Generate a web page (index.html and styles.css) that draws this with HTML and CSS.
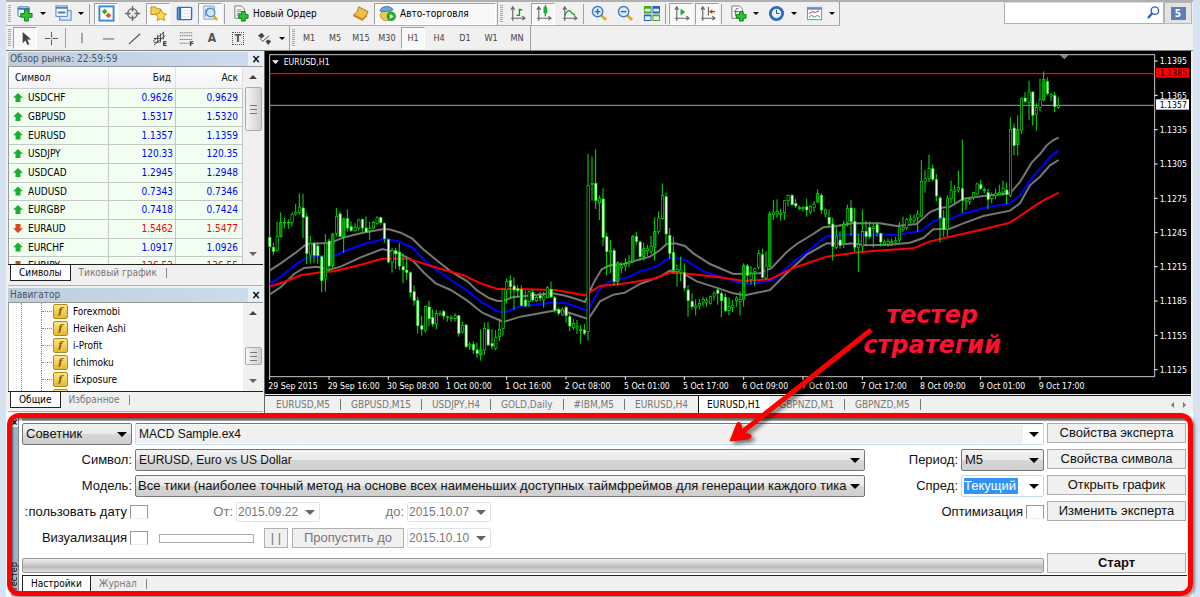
FILE: index.html
```html
<!DOCTYPE html>
<html lang="ru">
<head>
<meta charset="utf-8">
<title>EURUSD,H1</title>
<link rel="stylesheet" href="styles.css">
</head>
<body>
<div class="app">
  <header class="bars">
    <div class="bar-row">
      <div class="toolbar">
        <i class="grip"></i>
        <span class="split"><button class="tb" aria-label="Новый график"><svg viewBox="0 0 18 18"><rect x="1" y="2" width="12" height="10" rx="1" fill="#eef6ff" stroke="#3c78b4"/><path d="M1 4h12" stroke="#3c78b4" stroke-width="2"/><path d="M8 9V5h4v4h4v4h-4v4H8v-4H4V9z" fill="#2fc42f" stroke="#0a7d14"/></svg></button><i class="dd"></i></span>
        <span class="split"><button class="tb" aria-label="Профили"><svg viewBox="0 0 18 18"><rect x="5" y="6" width="12" height="10" fill="#dcebfb" stroke="#4a7fc0"/><rect x="1" y="1" width="12" height="11" fill="#f4f9ff" stroke="#4a7fc0"/><path d="M1 3h12M3 8h8" stroke="#4a7fc0" stroke-width="2"/></svg></button><i class="dd"></i></span>
        <i class="sep wide"></i>
        <button class="tb on" aria-label="Обзор рынка"><svg viewBox="0 0 18 18"><rect x="1.500" y="1.500" width="15" height="15" fill="#fff" stroke="#3a86d8" stroke-width="2"/><path d="M4 7l3-3 3 3-3 3z" fill="#28b428"/><path d="M8 11l3-3 3 3-3 3z" fill="#e8501e"/></svg></button>
        <button class="tb" aria-label="Окно данных"><svg viewBox="0 0 18 18" fill="none" stroke="#6a6a6a" stroke-width="1.500"><circle cx="9" cy="9" r="5"/><path d="M9 1v6M9 11v6M1 9h6M11 9h6"/></svg></button>
        <button class="tb on" aria-label="Навигатор"><svg viewBox="0 0 18 18"><path d="M1 2h5l1 2h4v6H1z" fill="#f7cf55" stroke="#b88a14"/><path d="M11.500 5l2 4 4 .5-3 3 .8 4-3.800-2-3.800 2 .8-4-3-3 4-.5z" fill="#ffdc50" stroke="#c08a10"/></svg></button>
        <button class="tb" aria-label="Терминал"><svg viewBox="0 0 18 18"><rect x="1.500" y="2.500" width="15" height="13" rx="1" fill="#fff" stroke="#2f6fc0" stroke-width="1.500"/><path d="M4 3v12" stroke="#2f6fc0" stroke-width="3"/><path d="M7 6h8M7 9h8M7 12h8" stroke="#d5dfec"/></svg></button>
        <button class="tb on" aria-label="Тестер стратегий"><svg viewBox="0 0 18 18"><path d="M2 1h11v14H2z" fill="#e6f0fa" stroke="#7ba0c8"/><path d="M4 4v8M6 3v6M11 3v4" stroke="#5588bb"/><circle cx="9" cy="8" r="4.500" fill="#cfe6fb" stroke="#5a90c8" stroke-width="1.500"/><path d="M12 11l4 5" stroke="#d9a520" stroke-width="2.500"/></svg></button>
        <i class="sep"></i>
        <button class="tb text order"><svg viewBox="0 0 18 18"><path d="M3 1h7l3 3v10H3z" fill="#fafafa" stroke="#777"/><path d="M5 5h5M5 7h6M5 9h4M5 11h4" stroke="#888"/><path d="M10 10V7h4v3h3v4h-3v3h-4v-3H7v-4z" fill="#2fc42f" stroke="#0a7d14"/></svg>Новый Ордер</button>
        <button class="tb" aria-label="MetaEditor"><svg viewBox="0 0 18 18"><path d="M7 2l10 5-2 4-4 4-9-5c3-1 4-4 5-8z" fill="#efbf4c" stroke="#a87414"/><path d="M1 10l10 5 5-5v2l-5 5-10-5z" fill="#c98d1c"/></svg></button>
        <button class="tb text on auto"><svg viewBox="0 0 18 18"><ellipse cx="8" cy="11" rx="6.500" ry="5.500" fill="#f2c94e" stroke="#b98a1a"/><path d="M1 6c1-5 11-6 14-1-3 2-11 3-14 1z" fill="#64a8e0" stroke="#3a78b0"/><circle cx="13" cy="12" r="5" fill="#1fae2c"/><path d="M11.500 9.500v5l4-2.500z" fill="#fff"/></svg>Авто-торговля</button>
      </div>
      <div class="toolbar">
        <i class="grip"></i>
        <button class="tb" aria-label="Бары"><svg viewBox="0 0 18 18" fill="none"><path d="M4 3v14M2 14h14M2 5l2-3 2 3M14 12l3 2-3 2" stroke="#666" stroke-width="1.200"/><path d="M8 11h3V4M11 5h3" stroke="#149a28" stroke-width="1.500"/></svg></button>
        <button class="tb on" aria-label="Свечи"><svg viewBox="0 0 18 18" fill="none"><path d="M4 3v14M2 14h14M2 5l2-3 2 3M14 12l3 2-3 2" stroke="#666" stroke-width="1.200"/><path d="M11 0v12" stroke="#149a28" stroke-width="1.500"/><rect x="9" y="2" width="4" height="7" rx="1" fill="#19b52e"/></svg></button>
        <button class="tb" aria-label="Линия"><svg viewBox="0 0 18 18" fill="none"><path d="M4 3v14M2 14h14M2 5l2-3 2 3M14 12l3 2-3 2" stroke="#666" stroke-width="1.200"/><path d="M4 11c3-6 5-6 7-3l4 3" stroke="#149a28" stroke-width="1.300"/></svg></button>
        <i class="sep"></i>
        <button class="tb" aria-label="Увеличить"><svg viewBox="0 0 18 18"><path d="M11 11l5 5" stroke="#dca928" stroke-width="3"/><circle cx="7" cy="7" r="5.500" fill="#d8ecfc" stroke="#3a7ec4" stroke-width="1.500"/><path d="M4 7h6M7 4v6" stroke="#2468b4" stroke-width="1.500"/></svg></button>
        <button class="tb" aria-label="Уменьшить"><svg viewBox="0 0 18 18"><path d="M11 11l5 5" stroke="#dca928" stroke-width="3"/><circle cx="7" cy="7" r="5.500" fill="#d8ecfc" stroke="#3a7ec4" stroke-width="1.500"/><path d="M4 7h6" stroke="#2468b4" stroke-width="1.500"/></svg></button>
        <button class="tb" aria-label="Расположить окна"><svg viewBox="0 0 18 18"><path d="M1 1h8v8H1zM10 10h8v7h-8z" fill="#4aa820"/><path d="M10 1h8v8h-8zM1 10h8v7H1z" fill="#2a62c8"/><path d="M2 4h6v3H2zM11 4h6v3h-6zM2 12h6v4H2zM11 12h6v4h-6z" fill="#e2eef0"/></svg></button>
        <i class="sep"></i>
        <button class="tb on" aria-label="Автопрокрутка"><svg viewBox="0 0 18 18"><path d="M4 3v14M2 14h14M2 5l2-3 2 3M14 12l3 2-3 2" stroke="#666" fill="none" stroke-width="1.200"/><path d="M8 4v7l5-3.500z" fill="#1ea834"/></svg></button>
        <button class="tb on" aria-label="Сдвиг графика"><svg viewBox="0 0 18 18"><path d="M4 3v14M2 14h14M2 5l2-3 2 3M14 12l3 2-3 2M10 2v9" stroke="#666" fill="none" stroke-width="1.200"/><path d="M11 7h6" stroke="#d03a14" stroke-width="1.500"/><path d="M11 7l3-2.500v5z" fill="#d03a14"/></svg></button>
        <i class="sep wide"></i>
        <span class="split"><button class="tb" aria-label="Индикаторы"><svg viewBox="0 0 18 18"><path d="M2 1h8l3 3v10H2z" fill="#fafafa" stroke="#777"/><path d="M9 4c-3-1-3 1-3 4v4M4 7h5" stroke="#555" fill="none"/><path d="M10 10V7h4v3h3v4h-3v3h-4v-3H7v-4z" fill="#2fc42f" stroke="#0a7d14"/></svg></button><i class="dd"></i></span>
        <span class="split"><button class="tb" aria-label="Периоды"><svg viewBox="0 0 18 18"><circle cx="9" cy="9" r="6.500" fill="#e6f2fc" stroke="#2a6cc0" stroke-width="3"/><path d="M9 5v4h3" stroke="#345" fill="none"/></svg></button><i class="dd"></i></span>
        <span class="split"><button class="tb" aria-label="Шаблоны"><svg viewBox="0 0 18 18"><rect x="1.500" y="2.500" width="15" height="13" fill="#fff" stroke="#5a94cc"/><path d="M1 4h16" stroke="#5a94cc" stroke-width="2"/><path d="M3 9l4-2 3 1 4-2" stroke="#b03020" fill="none"/><path d="M3 13l3-2 3 2 3-2 3 2" stroke="#2e9a38" fill="none"/></svg></button><i class="dd"></i></span>
      </div>
      <form class="search">
        <input type="text" aria-label="Поиск">
        <svg class="lens" viewBox="0 0 14 14" fill="none" stroke="#2c60c8"><circle cx="8.500" cy="5" r="4" stroke-width="1.500"/><path d="M5.500 8L1 13" stroke-width="2.500"/></svg>
        <button type="button" class="chat"><span>5</span></button>
      </form>
    </div>
    <div class="bar-row second">
      <div class="toolbar">
        <i class="grip"></i>
        <button class="tb on" aria-label="Курсор"><svg viewBox="0 0 18 18"><path d="M6 2v12l3-3 2 5 2-1-2-5h4z" fill="#444"/></svg></button>
        <button class="tb" aria-label="Перекрестие"><svg viewBox="0 0 18 18"><path d="M9 2v6M9 10v6M2 9h6M10 9h6" stroke="#555"/></svg></button>
        <i class="sep wide"></i>
        <button class="tb" aria-label="Вертикальная линия"><svg viewBox="0 0 18 18"><path d="M8.500 3v11" stroke="#555"/></svg></button>
        <button class="tb" aria-label="Горизонтальная линия"><svg viewBox="0 0 18 18"><path d="M3 9.500h12" stroke="#555"/></svg></button>
        <button class="tb" aria-label="Трендовая линия"><svg viewBox="0 0 18 18"><path d="M3 15L15 4" stroke="#555" stroke-width="1.300"/></svg></button>
        <button class="tb" aria-label="Канал"><svg viewBox="0 0 18 18"><path d="M1 12L13 2M2 16L14 6M6 5v8M9 4v9M12 2v8M2 9h9M2 13h6" stroke="#444" fill="none"/><text x="11" y="17" class="mini">E</text></svg></button>
        <button class="tb" aria-label="Фибоначчи"><svg viewBox="0 0 18 18"><path d="M2 3h14M2 6h14M2 10h14M2 14h9" stroke="#444" stroke-dasharray="1 1"/><text x="12" y="17" class="mini">F</text></svg></button>
        <button class="tb letter" aria-label="Текст">A</button>
        <button class="tb letter" aria-label="Метка"><span class="dotted">T</span></button>
        <span class="split"><button class="tb" aria-label="Стрелки"><svg viewBox="0 0 18 18"><path d="M2 6l4-3 3 3-3 3zM10 12l3-2 3 2-3 4z" fill="#444"/><path d="M4 9l3 3 7-6" stroke="#444" fill="none"/></svg></button><i class="dd"></i></span>
      </div>
      <div class="toolbar">
        <i class="grip"></i>
        <button class="tb">M1</button><button class="tb">M5</button><button class="tb">M15</button><button class="tb">M30</button><button class="tb on">H1</button><button class="tb">H4</button><button class="tb">D1</button><button class="tb">W1</button><button class="tb">MN</button>
      </div>
    </div>
  </header>

  <main class="work">
    <aside class="side">
      <section class="dock market">
        <h2 class="title"><span>Обзор рынка: 22:59:59</span><button aria-label="Закрыть">×</button></h2>
        <div class="dock-body">
          <div class="list">
            <table>
              <thead><tr><th>Символ</th><th>Бид</th><th>Аск</th></tr></thead>
              <tbody>
                <tr class="up"><td>USDCHF</td><td>0.9626</td><td>0.9629</td></tr>
                <tr class="up"><td>GBPUSD</td><td>1.5317</td><td>1.5320</td></tr>
                <tr class="up"><td>EURUSD</td><td>1.1357</td><td>1.1359</td></tr>
                <tr class="up"><td>USDJPY</td><td>120.33</td><td>120.35</td></tr>
                <tr class="up"><td>USDCAD</td><td>1.2945</td><td>1.2948</td></tr>
                <tr class="up"><td>AUDUSD</td><td>0.7343</td><td>0.7346</td></tr>
                <tr class="up"><td>EURGBP</td><td>0.7418</td><td>0.7424</td></tr>
                <tr class="down"><td>EURAUD</td><td>1.5462</td><td>1.5477</td></tr>
                <tr class="up"><td>EURCHF</td><td>1.0917</td><td>1.0926</td></tr>
                <tr class="down"><td>EURJPY</td><td>136.53</td><td>136.55</td></tr>
              </tbody>
            </table>
          </div>
          <div class="scroll"><i class="tri up"></i><i class="thumb long"></i><i class="tri down"></i></div>
        </div>
        <nav class="tabs"><a href="#" class="active">Символы</a><a href="#">Тиковый график</a></nav>
      </section>
      <section class="dock navigator">
        <h2 class="title"><span>Навигатор</span><button aria-label="Закрыть">×</button></h2>
        <div class="dock-body">
          <ul class="tree">
            <li>Forexmobi</li><li>Heiken Ashi</li><li>i-Profit</li><li>Ichimoku</li><li>iExposure</li><li></li>
          </ul>
          <div class="scroll"><i class="tri up"></i><i class="thumb low"></i><i class="tri down"></i></div>
        </div>
        <nav class="tabs"><a href="#" class="active">Общие</a><a href="#">Избранное</a></nav>
      </section>
    </aside>

    <section class="chart-pane">
      <div class="chart">
        <svg id="chart" viewBox="3 3 2778 1029"></svg>
        <p class="caption">тестер<br>стратегий</p>
      </div>
      <nav class="chart-tabs">
        <a href="#">EURUSD,M5</a><a href="#">GBPUSD,M15</a><a href="#">USDJPY,H4</a><a href="#">GOLD,Daily</a><a href="#">#IBM,M5</a><a href="#" class="last">EURUSD,H4</a><a href="#" class="active">EURUSD,H1</a><a href="#">GBPNZD,M1</a><a href="#">GBPNZD,M5</a>
        <span class="pager"><i class="tri left"></i><i class="tri right"></i></span>
      </nav>
    </section>
  </main>

  <section class="tester">
    <div class="spine"><button aria-label="Закрыть">×</button><span>Тестер</span></div>
    <div class="tester-main">
      <form class="settings">
        <div class="row">
          <span class="combo kind"><select aria-label="Тип"><option>Советник</option></select></span>
          <span class="combo flat expert grow"><select aria-label="Эксперт"><option>MACD Sample.ex4</option></select></span>
        </div>
        <button type="button" class="side-btn">Свойства эксперта</button>

        <div class="row">
          <label for="symbol" class="lead">Символ:</label>
          <span class="combo grow latin"><select id="symbol"><option>EURUSD, Euro vs US Dollar</option></select></span>
          <label for="period" class="mid">Период:</label>
          <span class="combo small"><select id="period"><option>M5</option></select></span>
        </div>
        <button type="button" class="side-btn">Свойства символа</button>

        <div class="row">
          <label for="model" class="lead">Модель:</label>
          <span class="combo grow model"><select id="model"><option>Все тики (наиболее точный метод на основе всех наименьших доступных таймфреймов для генерации каждого тика</option></select></span>
          <label for="spread" class="mid">Спред:</label>
          <span class="combo flat small"><input id="spread" type="text" value="Текущий"></span>
        </div>
        <button type="button" class="side-btn">Открыть график</button>

        <div class="row">
          <label for="usedate" class="check-label">:пользовать дату</label><input type="checkbox" id="usedate">
          <label for="from" class="muted from">От:</label>
          <span class="combo date"><select id="from"><option>2015.09.22</option></select></span>
          <label for="to" class="muted to">до:</label>
          <span class="combo date"><select id="to"><option>2015.10.07</option></select></span>
          <label for="opt" class="push">Оптимизация</label><input type="checkbox" id="opt">
        </div>
        <button type="button" class="side-btn">Изменить эксперта</button>

        <div class="row">
          <label for="visual" class="check-label">Визуализация</label><input type="checkbox" id="visual">
          <span class="speed"></span>
          <button type="button" class="off pause">| |</button>
          <button type="button" class="off skip">Пропустить до</button>
          <span class="combo date"><select aria-label="Пропустить до"><option>2015.10.10</option></select></span>
        </div>
        <span></span>

        <div class="progress"></div>
        <button type="button" class="side-btn start">Старт</button>
      </form>
      <nav class="tabs"><a href="#" class="active">Настройки</a><a href="#">Журнал</a></nav>
    </div>
  </section>

  <svg class="arrow" viewBox="0 0 150 118" width="150" height="118"><path d="M144 4L14 107" fill="none" stroke="#f00" stroke-width="5"/><path d="M3 115L10 97Q12 95 14 98L15 106L24 109Q25 112 21 113z" fill="#f00" stroke="#f00" stroke-linejoin="round"/></svg>
</div>
<script src="chart.js"></script>
</body>
</html>
```

FILE: styles.css
```css
* { box-sizing: border-box; }
body {
  margin: 0;
  background: #d6e3f2;
  font: 10px/14px "DejaVu Sans Condensed", "Noto Sans", sans-serif;
  color: #111;
  overflow: hidden;
}
button, input, select { font: inherit; color: inherit; margin: 0; padding: 0; border: 0; border-radius: 0; background: none; }
a { color: inherit; text-decoration: none; }
i { font-style: normal; }
.app { position: relative; margin: 0 7px 0 6px; background: #f0f0f0; min-height: 100vh; }

/* toolbars */
.bars { border-top: 2px solid #b0b0b0; border-bottom: 1px solid #808080; }
.bar-row { display: flex; height: 24px; }
.toolbar { display: flex; align-items: center; gap: 2px; padding: 0 1px 0 2px; border-right: 1px solid #a0a0a0; border-bottom: 1px solid #b0b0b0; }
.second .toolbar { border-bottom: 0; }
.second .toolbar .tb { font-size: 9px; color: #444; }
.grip { width: 3px; height: 18px; background: repeating-linear-gradient(#a8a8a8 0 1px, #f0f0f0 1px 2px); }
.tb { width: 24px; height: 22px; display: flex; align-items: center; justify-content: center; white-space: nowrap; }
.tb.on { background: #f8f8f8; border: 1px solid; border-color: #a0a0a0 #fff #fff #a0a0a0; }
.tb svg { width: 17px; height: 17px; flex: none; }
.tb.text { justify-content: flex-start; gap: 4px; padding-left: 4px; color: #000; }
.order { width: 118px; }
.auto { width: 122px; }
.split { display: flex; align-items: center; }
.dd { width: 12px; display: flex; justify-content: center; }
.dd::before { content: ""; border: 3px solid transparent; border-top-color: #000; border-bottom: 0; }
.sep { width: 2px; height: 20px; border-left: 1px solid #a0a0a0; }
.sep.wide { width: 3px; }
.mini { font: bold 7px "DejaVu Sans", sans-serif; fill: #333; }
.second .toolbar .letter { font-size: 12px; font-weight: bold; color: #555; }
.dotted { border: 1px dotted #555; width: 12px; height: 13px; line-height: 12px; font-size: 11px; }
.search { margin-left: auto; display: flex; width: 189px; padding-right: 1px; position: relative; }
.search input { flex: 1; min-width: 0; height: 22px; background: #fff; border: 1px solid #b0b0b0; border-top-color: #ddd; }
.lens { position: absolute; right: 33px; top: 4px; width: 13px; height: 13px; }
.chat { width: 28px; height: 22px; background: #e3e3e3; border: 1px solid #b8b8b8; }
.chat span { display: block; margin: 0 auto; width: 15px; height: 13px; background: #5c7fb8; color: #fff; font-weight: bold; line-height: 13px; }

/* docked panels */
.work { display: flex; }
.side { width: 258px; padding: 1px 1px 0 2px; }
.dock { border-bottom: 1px solid #b0b0b0; }
.title { margin: 0; font: inherit; color: #44546a; height: 14px; display: flex; justify-content: space-between; background: linear-gradient(90deg, #bfcddb, #ccdcec 240px, #e6eef7 240px); }
.title span { padding-left: 2px; }
.title button, .spine button { width: 10px; color: #000; font-weight: bold; font-size: 12px; line-height: 13px; margin-right: 2px; }
.dock-body { display: flex; border: 1px solid #999; border-width: 1px 0 0 1px; background: #fff; overflow: hidden; }
.market .dock-body { height: 198px; }
.market { height: 234px; }
.list { flex: 1; }
table { width: 100%; border-collapse: separate; border-spacing: 0; table-layout: fixed; }
th { font-weight: normal; text-align: right; height: 22px; padding: 0 4px; background: linear-gradient(#fff, #f2f3f5); border-right: 1px solid #e0e0e0; border-bottom: 1px solid #d0d0d0; }
th:first-child { width: 100px; text-align: left; padding-left: 6px; }
td { height: 19px; padding: 0 2px; border-right: 1px solid #c4c8c4; border-bottom: 1px solid #c4c8c4; background: #f0fff0; text-align: right; }
tr:nth-child(3n) td { height: 18px; }
td:first-child { text-align: left; color: #000; }
td:last-child { padding-right: 4px; }
td:first-child::before { content: ""; display: inline-block; width: 10px; height: 9px; margin: 0 5px 0 2px; vertical-align: -1px; background: #1cae30; clip-path: polygon(50% 0, 100% 52%, 75% 52%, 75% 100%, 25% 100%, 25% 52%, 0 52%); }
td.down td:first-child::before, .down td:first-child::before { background: #d8481c; clip-path: polygon(50% 100%, 100% 48%, 75% 48%, 75% 0, 25% 0, 25% 48%, 0 48%); }
.up td + td { color: #00f; }
.down td + td { color: #f00; }
.scroll { width: 20px; display: flex; flex-direction: column; align-items: center; padding: 8px 0; background: #f0f0f0; }
.tri { border: 4px solid transparent; }
.tri.up { border-bottom-color: #444; border-top: 0; }
.tri.down { border-top-color: #666; border-bottom: 0; margin-top: auto; }
.thumb { width: 17px; border: 1px solid #aaa; border-radius: 2px; background: repeating-linear-gradient(#777 0 1px, transparent 1px 4px) center / 7px 9px no-repeat, linear-gradient(90deg, #f4f4f4, #d0d0d0); }
.thumb.long { height: 44px; margin-top: 8px; }
.thumb.low { height: 18px; margin-top: 32px; }
.tabs { display: flex; align-items: flex-start; border-top: 1px solid #222; padding-left: 2px; color: #777; }
.tabs a { padding: 0 8px; height: 16px; line-height: 16px; display: flex; align-items: center; }
.tabs a:not(.active)::after { content: ""; border-right: 1px solid #888; height: 10px; margin-left: 9px; }
.tabs .active { background: #fff; color: #000; border: solid #222; border-width: 0 1px 1px 1px; }
.navigator { margin-top: 2px; height: 124px; }
.navigator .dock-body { height: 89px; }
.tree { flex: 1; margin: 0 0 0 12px; padding: 0 0 0 19px; list-style: none; border-left: 1px dotted #888; }
.tree li { height: 17px; line-height: 17px; display: flex; align-items: center; border-left: 1px dotted #888; color: #000; }
.tree li::before { content: ""; order: -2; width: 10px; border-top: 1px dotted #888; }
.tree li::after { content: "f"; order: -1; width: 13px; height: 13px; margin: 0 5px 0 1px; text-align: center; font: italic bold 10px/12px "DejaVu Serif", serif; color: #8a5a00; background: linear-gradient(#fbe68a, #e6b830); border: 1px solid #b08a20; border-radius: 2px; }

/* chart */
.chart-pane { flex: 1; min-width: 0; border-left: 1px solid #666; padding-right: 2px; }
.chart { position: relative; background: #000; }
.chart svg { display: block; width: 100%; }
.chart text { font: 26px "DejaVu Sans Condensed", "Noto Sans", sans-serif; fill: #fff; }
.caption { position: absolute; right: 190px; bottom: 34px; margin: 0; text-align: center; font: italic bold 24px/30px "DejaVu Sans", sans-serif; color: #ff1030; }
.chart-tabs { display: flex; align-items: center; height: 18px; border-top: 1px solid #111; margin-top: 1px; padding-left: 1px; color: #777; }
.chart-tabs a { padding: 0 0 0 10px; display: flex; align-items: center; }
.chart-tabs a::after { content: ""; border-right: 1px solid #777; height: 11px; margin-left: 10px; }
.chart-tabs .active { background: #fff; color: #000; border-left: 1px solid #111; padding: 0 9px 0 8px; height: 17px; }
.chart-tabs .active::after, .chart-tabs .last::after { border: 0; }
.chart-tabs .active::after { margin: 0; }
.pager { margin-left: auto; display: flex; gap: 9px; padding-right: 2px; }
.tri.left { border-width: 3px; border-right-color: #777; }
.tri.right { border-width: 3px; border-left-color: #777; }

/* strategy tester */
.tester { position: relative; display: flex; background: #fff; height: 183px; padding: 5px 6px 0 5px; font: 13px/16px "Liberation Sans", Arial, sans-serif; }
.tester::after { content: ""; position: absolute; inset: 0 0 0 1px; border: 5px solid #f00; border-radius: 12px; box-shadow: 2px 2px 3px #0006, inset 1px 2px 2px #0007; pointer-events: none; }
.spine { width: 8px; padding-bottom: 5px; background: #9db4cc; display: flex; flex-direction: column; justify-content: space-between; align-items: center; margin-right: 3px; border-right: 1px solid #888; }
.spine button { font-size: 10px; line-height: 9px; margin: 0; background: #f0f0f0; width: 7px; }
.spine span { writing-mode: vertical-rl; transform: rotate(180deg); font: 9px/9px "DejaVu Sans Condensed", "Noto Sans", sans-serif; }
.tester-main { flex: 1; min-width: 0; border-top: 3px solid #b4b4b4; display: flex; flex-direction: column; }
.settings { display: grid; grid-template-columns: minmax(0, 1fr) 139px; grid-auto-rows: 22px; gap: 4px 3px; padding: 2px 1px 0 0; }
.row { display: flex; align-items: center; gap: 3px; }
.grow { flex: 1; min-width: 0; }
.combo { position: relative; display: flex; align-items: center; height: 22px; border: 1px solid #777; border-radius: 2px; background: linear-gradient(#f2f2f2, #e9e9e9 50%, #d6d6d6 50%, #cfcfcf); }
.combo select { appearance: none; width: 100%; padding: 0 18px 0 3px; outline: 0; }
.combo.model select { padding: 0 16px 0 2px; }
.combo::after { content: ""; position: absolute; right: 4px; border: 5px solid transparent; border-top-color: #000; border-bottom: 0; pointer-events: none; }
.kind { width: 110px; }
.small { width: 83px; }
.latin select, .expert select, .date select { font-size: 12px; }
.combo.flat { background: #fff; border-color: #c5daf0; }
.combo.expert { border-top-color: #4a86bd; background: linear-gradient(#f0f0f0, #f0f0f0) left / calc(100% - 20px) 18px no-repeat, #fff; }
.flat input { width: 54px; height: 16px; margin-left: 2px; background: #3193f5; color: #fff; }
.lead { width: 110px; text-align: right; }
.mid { width: 90px; text-align: right; }
.check-label { width: 105px; text-align: right; white-space: nowrap; }
input[type="checkbox"] { appearance: none; width: 18px; height: 14px; border: 1px solid #999; border-bottom-color: #eee; background: #fff; }
.muted, .date, .off { color: #777; }
.from { width: 82px; text-align: right; }
.to { width: 81px; text-align: right; }
.date { width: 84px; height: 20px; border-color: #dfe4ea; background: #fff; }
.combo.date::after { border-top-color: #666; }
.combo.date select { padding: 0 0 0 1px; }
.push { margin-left: auto; }
.speed { width: 95px; height: 9px; border: 1px solid #aaa; margin: 0 7px 0 8px; }
.off { height: 20px; border: 1px solid #b0b0b0; background: #f0f0f0; }
.pause { width: 24px; margin-right: 1px; }
.skip { width: 112px; }
.side-btn { height: 20px; border: 1px solid #adadad; background: #f0f0f0; white-space: nowrap; }
.start { font-weight: bold; }
.progress { height: 15px; margin-top: 5px; border: 1px solid #999; border-radius: 2px; background: linear-gradient(#eee, #c8c8c8 50%, #bbb 60%, #ddd); }
.tester .tabs { background: #f0f0f0; font: 10px/14px "DejaVu Sans Condensed", "Noto Sans", sans-serif; padding-left: 0; }
.arrow { position: absolute; left: 721px; top: 326px; filter: drop-shadow(3px 3px 2px #0008); pointer-events: none; }
```

FILE: chart.js
```javascript
// Each bar: high, low, body top, body bottom, kind (w = falling, g = strong rising, default = rising).
const blocks = [
  { first: 0, dy: 0, bars: `560,592,562,590,w 578,616,592,604,w 515,604,560,602 487,562,517,560,g 503,536,517,519 508,536,517,519 487,529,494,517 462,497,487,492 430,494,471,487 432,564,474,502,w 490,642,500,611,w 558,640,580,615 576,640,580,616,w 578,642,588,617,w 617,727,620,692,w 552,725,580,687 566,664,573,648,w 550,655,552,648,g 474,560,499,550 484,560,492,560,w 503,608,506,560,g 478,545,506,534,w 515,546,530,541,w 520,545,532,541 506,542,510,534 506,550,508,534,w 499,546,534,546,w 515,570,536,541 513,538,517,534 499,524,503,520 500,524,503,518,w 517,578,520,566,w 566,640,569,636,w 594,668,601,636 594,657,602,612,w 580,660,606,648,w 610,700,650,660,w 622,690,660,668,w 664,741,668,727,w 706,767,725,752,w 741,851,752,827,w 797,857,827,838,w 767,848,769,841 752,828,771,806,w 778,830,802,822,w 780,838,790,822 782,797,790,795 780,808,784,798,w 797,815,800,802 795,815,802,806 790,815,797,806 795,860,797,850,w 815,850,827,846 822,895,825,890,w 876,900,883,888 874,912,883,900,w 878,925,900,910,w 838,932,900,914,g 818,914,835,900 816,888,838,885,w 838,898,880,888,w 840,900,862,895 806,874,838,860 716,857,718,836 685,760,694,718 676,743,692,710,w 682,780,708,720,w 706,741,716,722,w 706,769,718,766,w 722,771,750,768,w 722,771,725,755 720,755,727,750,w 737,757,742,752 725,755,736,744,w 725,773,738,750 708,745,713,742 695,745,718,741,w 738,788,743,780,w 772,797,778,790,w 772,797,778,795` },
  { first: 80, dy: 240, bars: `528,578,532,557,w 552,604,560,588,w 568,600,580,592 570,612,590,594 585,641,598,602,g 582,615,600,610,w 72,632,166,605 80,212,160,164 58,237,160,212,w 196,270,206,218 175,348,207,322,w 310,437,320,365,w 330,430,362,366 355,468,362,455,w 394,466,398,455,g 396,430,408,414 384,424,402,408 375,412,396,400 315,398,318,396,g 306,344,320,334,w 332,392,336,380,w 338,392,356,380,g 344,378,356,362 318,372,350,364 262,392,304,352,g 244,312,264,304 160,270,196,266 188,340,200,312,w 294,386,316,370,w 320,430,368,420,w 404,470,418,424 380,454,420,426 400,484,428,474,w 466,560,480,512,w 490,538,514,530,w 508,556,528,532 506,538,520,526 500,530,508,516 502,530,512,518 496,524,500,520 484,512,490,498 474,524,480,490,w 484,562,490,512,w 490,546,502,542,w 502,556,530,542 510,546,526,532 498,530,504,512 484,556,508,514 400,530,406,508,g 402,460,408,436,w 408,464,432,448 412,468,416,424 360,418,370,412 356,446,374,442,w 364,448,408,444 244,412,252,410,g 210,270,248,254 208,264,244,252 236,272,250,254 210,270,212,248 194,230,196,212 192,228,196,224,w 206,234,220,228,w 226,240,232,236 228,244,232,236 206,260,230,240,w 226,252,230,246 214,246,224,232 178,220,190,216,g 190,252,196,240,w 236,262,240,252 238,290,262,282,w 264,392,282,350,w 290,358,320,352 304,356,330,346,w 272,354,282,342,g 224,290,236,276` },
  { first: 157, dy: 0, bars: `450,558,474,514,w 474,606,514,592,w 552,666,584,592 478,606,544,588 512,588,544,560,w 514,568,532,560,w 520,592,530,536 516,560,524,548,w 548,590,550,576,w 568,586,576,582 566,590,574,582 566,588,574,578 560,580,572,576 516,578,534,570 500,546,532,538 504,540,508,534 494,520,506,510 494,520,504,512 480,546,492,502 330,502,394,498 360,428,386,396 314,396,356,386 344,394,356,388,w 372,454,388,438,w 438,578,444,504,w 480,560,504,538,w 436,560,446,538 392,460,422,446 406,460,420,424 362,428,412,420 268,490,416,452,w 444,480,452,456 444,464,448,454 426,450,428,442 398,436,402,432 390,420,404,416,w 412,430,418,422 416,478,428,448,w 428,460,436,446 416,448,430,436 404,436,428,434 392,438,416,426 398,462,420,434,w 202,442,238,436 220,316,234,286,w 196,316,238,284,g 142,252,146,240 126,160,144,154,w 92,210,126,158 124,226,126,196,w 160,242,172,192 86,184,148,172 64,154,88,150,g 82,136,94,130,w 130,154,134,138 126,186,136,170,w 142,176,166,172` }
];

// Averages come in three stretches, each with its own origin.
const origins = [[0, 0], [888, 240], [1758, 0]];
const averages = {
  '#777': [
    ['17,662 50,640 95,608 128,582 175,580 195,580 240,562 290,550 355,538 375,538 410,548 445,566 480,600 520,632 560,664 610,694 640,722 675,744 700,753 718,753 745,742 790,737 865,730',
     '10,496 40,504 75,516 85,495 100,460 125,418 150,406 190,402 220,394 270,380 300,360 320,342 345,340 375,348 400,370 450,402 520,432 600,430 635,414 680,366 710,342 750,318 790,292 830,288 865,282',
     '4,520 90,520 140,528 200,522 240,486 270,474 300,470 340,446 400,438 480,430 510,396 545,338 570,312 590,286 610,270 626,263'],
    ['17,733 50,712 90,672 120,654 160,650 195,660 230,650 290,622 355,597 400,608 445,630 480,668 515,700 560,720 610,752 655,788 718,816 770,800 880,780',
     '20,546 85,567 120,514 160,494 195,488 240,462 300,440 330,422 370,430 410,454 460,470 520,490 555,496 630,480 680,430 740,374 800,340 865,342',
     '0,580 50,586 120,584 180,578 220,564 250,538 300,536 340,520 400,498 480,482 510,460 540,406 570,380 600,346 626,330']
  ],
  '#0000ff': [
    ['17,703 50,680 100,640 130,622 175,618 210,618 250,600 300,582 340,572 360,566 400,573 445,592 480,630 510,654 560,690 610,722 650,755 700,784 720,788 770,768 865,758',
     '20,520 85,542 100,510 125,470 150,454 210,440 240,424 290,410 320,388 340,382 375,390 430,424 480,440 550,462 600,458 640,450 700,396 750,358 800,318 865,313',
     '0,552 140,555 215,542 250,514 270,506 300,508 330,494 400,474 480,460 510,436 550,378 580,346 600,320 626,302']
  ],
  '#ff0000': [
    ['17,710 60,696 110,676 160,668 210,664 290,644 355,626 430,626 470,638 520,654 600,676 650,700 700,717 760,717 870,720',
     '0,482 75,496 120,468 200,460 280,446 330,428 370,430 480,442 550,453 630,448 700,414 800,380 830,376 865,371',
     '0,610 60,604 190,595 240,574 320,556 400,538 480,518 560,464 590,446 626,428']
  ]
};

const step = 11.11;
const parts = [];
parts.push('<path d="M17 980V14H2672V980z" fill="none" stroke="#c8c8c8" stroke-width="3"/>');
parts.push('<path d="M17 71H2672" stroke="#ff0000" stroke-width="4"/><path d="M17 166H2672" stroke="#778899" stroke-width="4"/>');

for (const [color, lines] of Object.entries(averages)) {
  for (const line of lines) {
    const pts = line.map((s, k) => s.split(' ').map(p => {
      const [x, y] = p.split(',').map(Number);
      return `${x + origins[k][0]},${y + origins[k][1]}`;
    }).join(' ')).join(' ');
    parts.push(`<polyline points="${pts}" fill="none" stroke="${color}" stroke-width="6"/>`);
  }
}

const fills = { w: '#e8ffe8', g: '#008a00', u: '#000' };
for (const { first, dy, bars } of blocks) {
  bars.split(' ').forEach((bar, k) => {
    const [high, low, top, bottom, kind = 'u'] = bar.split(',');
    const x = Math.round(17 + (first + k) * step);
    const y = +top + dy;
    parts.push(`<path d="M${x} ${+high + dy}V${+low + dy}" stroke="#00e800" stroke-width="3"/>`);
    parts.push(`<rect x="${x - 3}" y="${y}" width="7" height="${Math.max(1, bottom - top)}" fill="${fills[kind]}" stroke="#00e800" stroke-width="2"/>`);
  });
}

const times = ['29 Sep 2015', '29 Sep 16:00', '30 Sep 08:00', '1 Oct 00:00', '1 Oct 16:00', '2 Oct 08:00', '5 Oct 01:00', '5 Oct 17:00', '6 Oct 09:00', '7 Oct 01:00', '7 Oct 17:00', '8 Oct 09:00', '9 Oct 01:00', '9 Oct 17:00'];
times.forEach((t, k) => {
  const x = 17 + Math.round(k * step * 16);
  parts.push(`<path d="M${x} 980v9" stroke="#fff" stroke-width="3"/><text x="${x - 4}" y="1016">${t}</text>`);
});

['1.1395', '1.1365', '1.1335', '1.1305', '1.1275', '1.1245', '1.1215', '1.1185', '1.1155', '1.1125'].forEach((p, k) => {
  const y = 33 + Math.round(k * 102.9);
  parts.push(`<path d="M2672 ${y}h9" stroke="#fff" stroke-width="3"/><text x="2687" y="${y + 10}">${p}</text>`);
});
parts.push('<rect x="2676" y="54" width="99" height="29" fill="#f00"/><text x="2687" y="79" style="fill:#000">1.1385</text>');
parts.push('<rect x="2676" y="148" width="99" height="31" fill="#fff"/><text x="2687" y="174" style="fill:#000">1.1357</text>');
parts.push('<path d="M2387 14h28l-14 14z" fill="#778899"/><path d="M24 31h21l-10 11z" fill="#fff"/><text x="59" y="46">EURUSD,H1</text>');
document.getElementById('chart').innerHTML = parts.join('');
```
